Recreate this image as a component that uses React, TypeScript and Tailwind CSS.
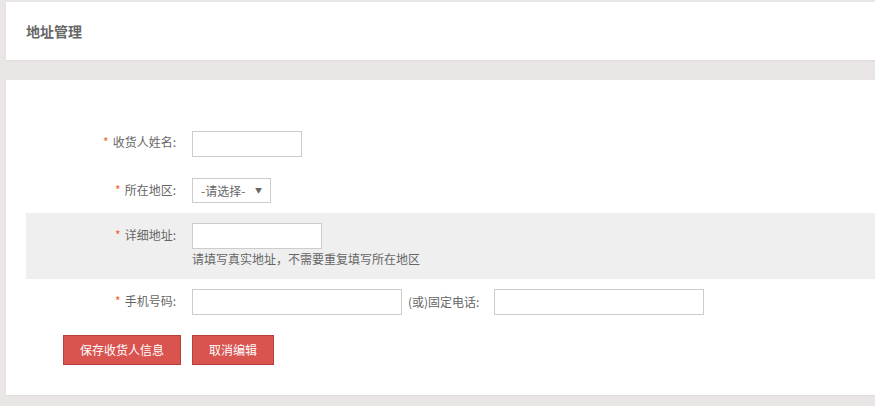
import React from 'react'

const font = { fontFamily: '"Noto Sans CJK SC", "Liberation Sans", sans-serif' }

function Label({ text }: { text: string }) {
  return (
    <div className="w-[150px] shrink-0 text-right text-[12px] leading-[24px] text-[#666]">
      <span className="text-[#f3602b] mr-[4px]">*</span>
      {text}:
    </div>
  )
}

function TextInput({ width }: { width: string }) {
  return <input type="text" className={`${width} h-[26px] border border-[#ccc] bg-white outline-none px-1 text-[12px]`} />
}

export default function App() {
  return (
    <div style={font} className="w-[875px] h-[406px] overflow-hidden bg-[#ebe6e6] pl-[6px] pt-[2px]">
      {/* Title panel */}
      <div className="h-[58px] bg-white flex items-center px-[20px] shadow-[0_1px_2px_rgba(0,0,0,0.06)]">
        <h2 className="text-[14px] font-bold text-[#666]">地址管理</h2>
      </div>

      {/* Form panel */}
      <div className="mt-[20px] h-[315px] bg-white pt-[50px] shadow-[0_1px_2px_rgba(0,0,0,0.06)]">
        <div className="flex ml-[20px]">
          <Label text="收货人姓名" />
          <div className="ml-[16px]">
            <TextInput width="w-[110px]" />
          </div>
        </div>

        <div className="flex ml-[20px] mt-[21px]">
          <Label text="所在地区" />
          <div className="ml-[16px] w-[79px] h-[25px] border border-[#ccc] flex items-center justify-between pl-[8px] pr-[8px] text-[12px] text-[#666]">
            <span className="pt-[2px]">-请选择-</span>
            <span className="text-[7px] text-[#666]">▼</span>
          </div>
        </div>

        <div className="flex ml-[20px] mt-[10px] bg-[#efefef] py-[10px] h-[66px]">
          <Label text="详细地址" />
          <div className="ml-[16px]">
            <TextInput width="w-[130px]" />
            <p className="text-[12px] text-[#666] leading-[20px]">请填写真实地址，不需要重复填写所在地区</p>
          </div>
        </div>

        <div className="flex ml-[20px] mt-[10px]">
          <Label text="手机号码" />
          <div className="ml-[16px] flex items-center">
            <TextInput width="w-[210px]" />
            <span className="ml-[6px] text-[12px] text-[#666]">(或)固定电话:</span>
            <div className="ml-[15px]">
              <TextInput width="w-[210px]" />
            </div>
          </div>
        </div>

        <div className="flex mt-[20px] ml-[57px] gap-[11px]">
          <button className="w-[118px] h-[30px] bg-[#d9534f] border border-[#b8403c] text-white text-[12px]">保存收货人信息</button>
          <button className="w-[82px] h-[30px] bg-[#d9534f] border border-[#b8403c] text-white text-[12px]">取消编辑</button>
        </div>
      </div>
    </div>
  )
}
